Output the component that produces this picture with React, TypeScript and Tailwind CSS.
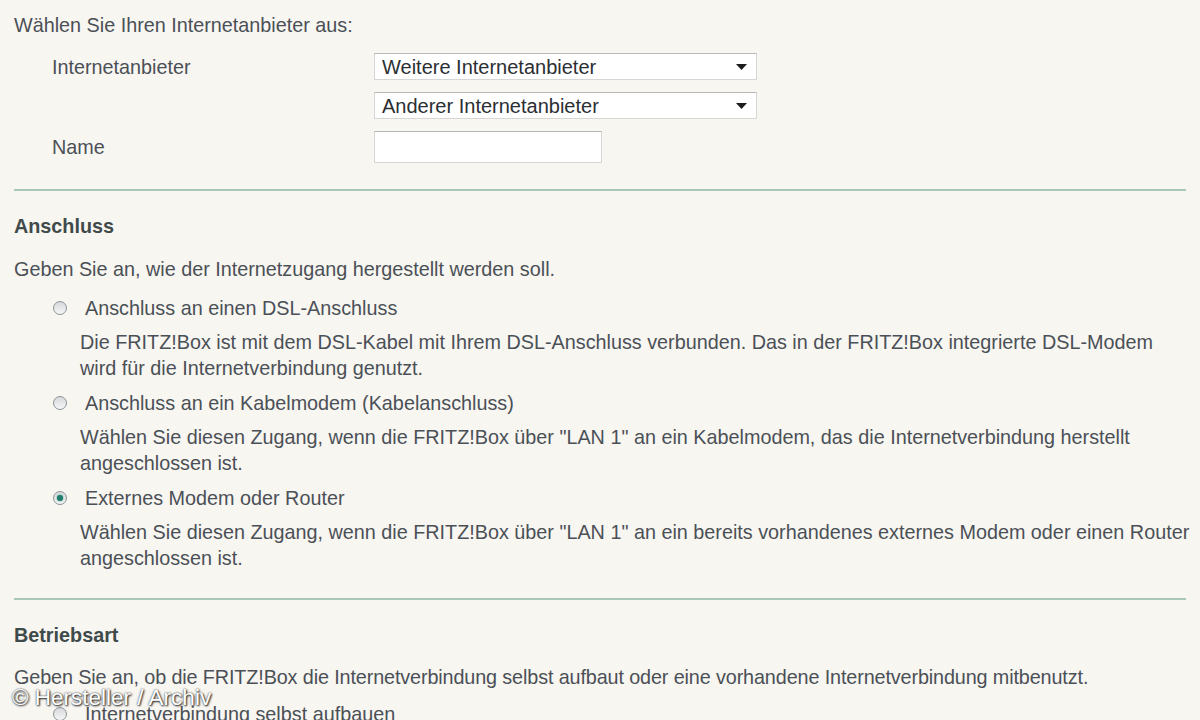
import React from 'react';

const Radio = ({ checked }: { checked?: boolean }) => (
    <span className="flex h-[14px] w-[14px] shrink-0 items-center justify-center rounded-full border border-[#8e9399] bg-gradient-to-b from-[#d6d8da] to-[#f6f6f6]">
        {checked && <span className="h-[6px] w-[6px] rounded-full bg-[#1f7a6a] shadow-[0_0_2px_#2aa590]" />}
    </span>
);

const Select = ({ value }: { value: string }) => (
    <div className="flex h-[27px] w-[383px] items-center justify-between border border-[#d6d6d4] border-t-[#b8b8b6] bg-white pl-[7px] pr-[9px] text-[20px] text-[#2b2f33]">
        <span>{value}</span>
        <svg width="11" height="6" viewBox="0 0 11 6"><path d="M0 0h11L5.5 6z" fill="#1c1c1c" /></svg>
    </div>
);

const options = [
    {
        label: 'Anschluss an einen DSL-Anschluss',
        lines: [
            'Die FRITZ!Box ist mit dem DSL-Kabel mit Ihrem DSL-Anschluss verbunden. Das in der FRITZ!Box integrierte DSL-Modem',
            'wird für die Internetverbindung genutzt.',
        ],
    },
    {
        label: 'Anschluss an ein Kabelmodem (Kabelanschluss)',
        lines: [
            'Wählen Sie diesen Zugang, wenn die FRITZ!Box über "LAN 1" an ein Kabelmodem, das die Internetverbindung herstellt',
            'angeschlossen ist.',
        ],
    },
    {
        label: 'Externes Modem oder Router',
        lines: [
            'Wählen Sie diesen Zugang, wenn die FRITZ!Box über "LAN 1" an ein bereits vorhandenes externes Modem oder einen Router',
            'angeschlossen ist.',
        ],
        checked: true,
    },
];

export default function App() {
    return (
        <div className="relative h-[720px] w-[1200px] overflow-hidden bg-[#f8f6f1] px-[14px] font-['Liberation_Sans',Arial,sans-serif] text-[19.8px] leading-[26px] text-[#4b5057]">
            {/* Provider */}
            <p className="pt-[12px]">Wählen Sie Ihren Internetanbieter aus:</p>
            <div className="mt-[15px] grid grid-cols-[322px_auto] items-center gap-y-[12px] pl-[38px]">
                <span>Internetanbieter</span>
                <Select value="Weitere Internetanbieter" />
                <span />
                <Select value="Anderer Internetanbieter" />
                <span>Name</span>
                <div className="h-[32px] w-[228px] border border-[#d6d6d4] border-t-[#b8b8b6] bg-white" />
            </div>
            <hr className="mt-[26px] border-0 border-t-2 border-[#a9c6b6]" />

            {/* Anschluss */}
            <h2 className="mt-[22px] font-bold text-[#3f4a4a]">Anschluss</h2>
            <p className="mt-[17px]">Geben Sie an, wie der Internetzugang hergestellt werden soll.</p>
            <div className="mt-[13px] flex flex-col gap-[9px] pl-[39px]">
                {options.map((o) => (
                    <div key={o.label}>
                        <div className="flex items-center gap-[18px]">
                            <Radio checked={o.checked} />
                            <span>{o.label}</span>
                        </div>
                        <p className="mt-[8px] pl-[27px]">
                            {o.lines.map((l) => (
                                <span key={l} className="block whitespace-nowrap">{l}</span>
                            ))}
                        </p>
                    </div>
                ))}
            </div>
            <hr className="mt-[27px] border-0 border-t-2 border-[#a9c6b6]" />

            {/* Betriebsart */}
            <h2 className="mt-[22px] font-bold text-[#3f4a4a]">Betriebsart</h2>
            <p className="mt-[16px] tracking-[-0.12px]">Geben Sie an, ob die FRITZ!Box die Internetverbindung selbst aufbaut oder eine vorhandene Internetverbindung mitbenutzt.</p>
            <div className="mt-[11px] flex items-center gap-[18px] pl-[39px]">
                <Radio />
                <span>Internetverbindung selbst aufbauen</span>
            </div>

            <span className="absolute left-[12px] top-[685px] text-[22.5px] leading-[26px] text-white [text-shadow:0_0_2px_#333,1px_1px_2px_#222]">
                © Hersteller / Archiv
            </span>
        </div>
    );
}
